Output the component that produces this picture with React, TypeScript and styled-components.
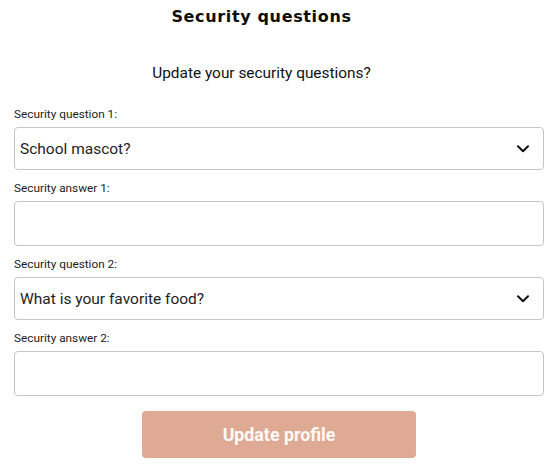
import styled, { createGlobalStyle } from "styled-components";

const GlobalStyle = createGlobalStyle`
  html, body {
    margin: 0;
    padding: 0;
    background: #ffffff;
  }
  * {
    box-sizing: border-box;
  }
`;

const Page = styled.div`
  width: 558px;
  padding: 0 14px;
  font-family: Roboto, "Liberation Sans", Arial, sans-serif;
  color: #111111;
  display: flex;
  flex-direction: column;
`;

const Header = styled.header`
  display: flex;
  flex-direction: column;
  align-items: center;
  padding-right: 35px;
`;

const Title = styled.h1`
  margin: 6px 0 0;
  font-family: "DejaVu Sans", Lato, sans-serif;
  font-size: 16px;
  line-height: 22px;
  font-weight: 700;
  letter-spacing: 0.65px;
  color: #0c0c0c;
`;

const Subtitle = styled.h2`
  margin: 36px 0 0;
  font-size: 15.4px;
  line-height: 18px;
  font-weight: 400;
  color: #111111;
`;

const Form = styled.form`
  margin-top: 25px;
  display: flex;
  flex-direction: column;
  gap: 11px;
`;

const Field = styled.div`
  display: flex;
  flex-direction: column;
`;

const Label = styled.label`
  font-size: 11.8px;
  line-height: 14px;
  margin-bottom: 6px;
  color: #1c1c1c;
`;

const SelectWrap = styled.div`
  position: relative;
  height: 43px;
`;

const Select = styled.select`
  appearance: none;
  width: 100%;
  height: 100%;
  border: 1px solid #c6c6c6;
  border-radius: 4px;
  padding: 0 40px 0 5px;
  background: #ffffff;
  font-family: Roboto, "Liberation Sans", Arial, sans-serif;
  font-size: 15.5px;
  color: #1e1e1e;
  outline: none;
`;

const Chevron = styled.svg`
  position: absolute;
  right: 15px;
  top: 50%;
  transform: translateY(-50%);
  pointer-events: none;
`;

const TextInput = styled.input<{ $height: number }>`
  width: 100%;
  height: ${(p) => p.$height}px;
  border: 1px solid #c6c6c6;
  border-radius: 4px;
  padding: 0 8px;
  font-family: Roboto, "Liberation Sans", Arial, sans-serif;
  font-size: 15px;
  outline: none;
`;

const SubmitButton = styled.button`
  align-self: center;
  margin-top: 4px;
  width: 274px;
  height: 47px;
  border: none;
  border-radius: 4px;
  background: #dfaa93;
  color: #fffaf7;
  font-family: Roboto, "Liberation Sans", Arial, sans-serif;
  font-size: 17.8px;
  font-weight: 700;
  cursor: pointer;
`;

function QuestionSelect({ id, value, options }: { id: string; value: string; options: string[] }) {
  return (
    <SelectWrap>
      <Select id={id} defaultValue={value}>
        {options.map((o) => (
          <option key={o} value={o}>
            {o}
          </option>
        ))}
      </Select>
      <Chevron width="12" height="8" viewBox="0 0 12 8" fill="none">
        <path d="M1 1.2L6 6.2L11 1.2" stroke="#111" strokeWidth="2" strokeLinecap="round" strokeLinejoin="round" />
      </Chevron>
    </SelectWrap>
  );
}

const QUESTIONS = ["School mascot?", "What is your favorite food?", "Name of your first pet?", "City you were born in?"];

export default function App() {
  return (
    <>
      <GlobalStyle />
      <Page>
        <Header>
          <Title>Security questions</Title>
          <Subtitle>Update your security questions?</Subtitle>
        </Header>
        <Form onSubmit={(e) => e.preventDefault()}>
          <Field>
            <Label htmlFor="q1">Security question 1:</Label>
            <QuestionSelect id="q1" value="School mascot?" options={QUESTIONS} />
          </Field>
          <Field>
            <Label htmlFor="a1">Security answer 1:</Label>
            <TextInput id="a1" type="text" $height={45} />
          </Field>
          <Field>
            <Label htmlFor="q2">Security question 2:</Label>
            <QuestionSelect id="q2" value="What is your favorite food?" options={QUESTIONS} />
          </Field>
          <Field>
            <Label htmlFor="a2">Security answer 2:</Label>
            <TextInput id="a2" type="text" $height={45} />
          </Field>
          <SubmitButton type="submit">Update profile</SubmitButton>
        </Form>
      </Page>
    </>
  );
}
